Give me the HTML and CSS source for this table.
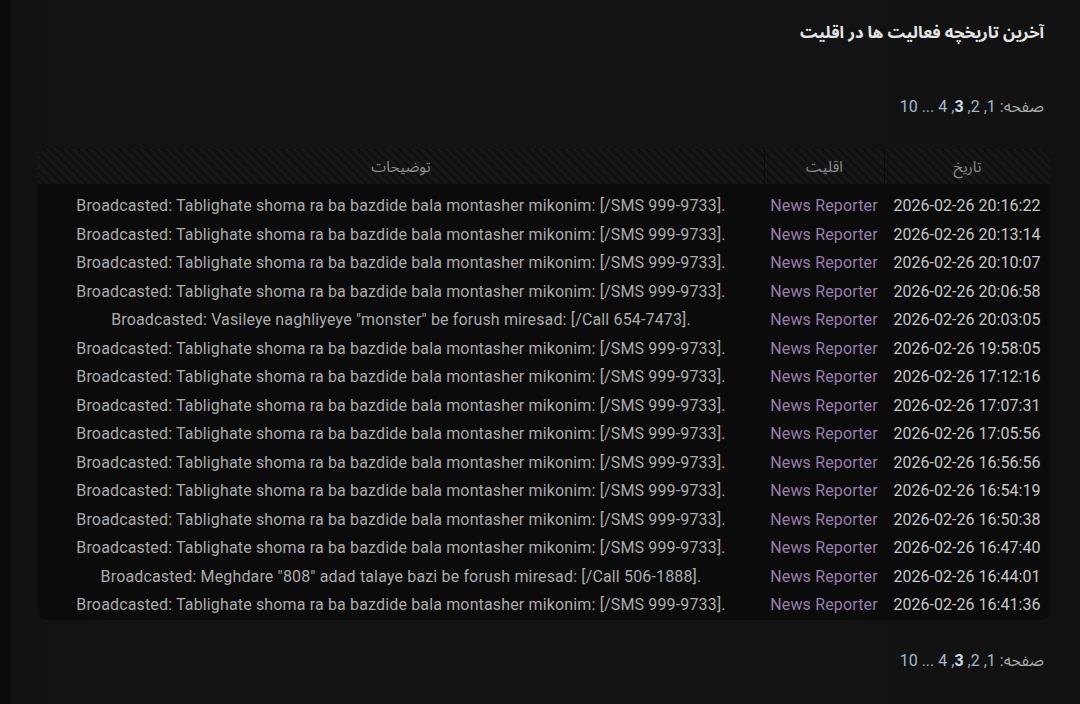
FILE: index.html
```html
<!DOCTYPE html>
<html lang="fa" dir="rtl">
<head>
<meta charset="utf-8">
<title>آخرین تاریخچه فعالیت ها در اقلیت</title>
<link rel="stylesheet" href="styles.css">
</head>
<body>
<div class="page">
  <h2 class="title">آخرین تاریخچه فعالیت ها در اقلیت</h2>
  <p class="pager">صفحه: <a href="#">1</a>, <a href="#">2</a>, <b class="current">3</b>, <a href="#">4</a> ... <a href="#">10</a></p>
  <table class="log">
    <thead>
      <tr><th class="c-date">تاریخ</th><th class="c-fac">اقلیت</th><th class="c-desc">توضیحات</th></tr>
    </thead>
    <tbody>
      <tr><td class="ltr date">2026-02-26 20:16:22</td><td class="ltr fac">News Reporter</td><td class="ltr desc">Broadcasted: Tablighate shoma ra ba bazdide bala montasher mikonim: [/SMS 999-9733].</td></tr>
      <tr><td class="ltr date">2026-02-26 20:13:14</td><td class="ltr fac">News Reporter</td><td class="ltr desc">Broadcasted: Tablighate shoma ra ba bazdide bala montasher mikonim: [/SMS 999-9733].</td></tr>
      <tr><td class="ltr date">2026-02-26 20:10:07</td><td class="ltr fac">News Reporter</td><td class="ltr desc">Broadcasted: Tablighate shoma ra ba bazdide bala montasher mikonim: [/SMS 999-9733].</td></tr>
      <tr><td class="ltr date">2026-02-26 20:06:58</td><td class="ltr fac">News Reporter</td><td class="ltr desc">Broadcasted: Tablighate shoma ra ba bazdide bala montasher mikonim: [/SMS 999-9733].</td></tr>
      <tr><td class="ltr date">2026-02-26 20:03:05</td><td class="ltr fac">News Reporter</td><td class="ltr desc">Broadcasted: Vasileye naghliyeye "monster" be forush miresad: [/Call 654-7473].</td></tr>
      <tr><td class="ltr date">2026-02-26 19:58:05</td><td class="ltr fac">News Reporter</td><td class="ltr desc">Broadcasted: Tablighate shoma ra ba bazdide bala montasher mikonim: [/SMS 999-9733].</td></tr>
      <tr><td class="ltr date">2026-02-26 17:12:16</td><td class="ltr fac">News Reporter</td><td class="ltr desc">Broadcasted: Tablighate shoma ra ba bazdide bala montasher mikonim: [/SMS 999-9733].</td></tr>
      <tr><td class="ltr date">2026-02-26 17:07:31</td><td class="ltr fac">News Reporter</td><td class="ltr desc">Broadcasted: Tablighate shoma ra ba bazdide bala montasher mikonim: [/SMS 999-9733].</td></tr>
      <tr><td class="ltr date">2026-02-26 17:05:56</td><td class="ltr fac">News Reporter</td><td class="ltr desc">Broadcasted: Tablighate shoma ra ba bazdide bala montasher mikonim: [/SMS 999-9733].</td></tr>
      <tr><td class="ltr date">2026-02-26 16:56:56</td><td class="ltr fac">News Reporter</td><td class="ltr desc">Broadcasted: Tablighate shoma ra ba bazdide bala montasher mikonim: [/SMS 999-9733].</td></tr>
      <tr><td class="ltr date">2026-02-26 16:54:19</td><td class="ltr fac">News Reporter</td><td class="ltr desc">Broadcasted: Tablighate shoma ra ba bazdide bala montasher mikonim: [/SMS 999-9733].</td></tr>
      <tr><td class="ltr date">2026-02-26 16:50:38</td><td class="ltr fac">News Reporter</td><td class="ltr desc">Broadcasted: Tablighate shoma ra ba bazdide bala montasher mikonim: [/SMS 999-9733].</td></tr>
      <tr><td class="ltr date">2026-02-26 16:47:40</td><td class="ltr fac">News Reporter</td><td class="ltr desc">Broadcasted: Tablighate shoma ra ba bazdide bala montasher mikonim: [/SMS 999-9733].</td></tr>
      <tr><td class="ltr date">2026-02-26 16:44:01</td><td class="ltr fac">News Reporter</td><td class="ltr desc">Broadcasted: Meghdare "808" adad talaye bazi be forush miresad: [/Call 506-1888].</td></tr>
      <tr><td class="ltr date">2026-02-26 16:41:36</td><td class="ltr fac">News Reporter</td><td class="ltr desc">Broadcasted: Tablighate shoma ra ba bazdide bala montasher mikonim: [/SMS 999-9733].</td></tr>
    </tbody>
  </table>
  <p class="pager">صفحه: <a href="#">1</a>, <a href="#">2</a>, <b class="current">3</b>, <a href="#">4</a> ... <a href="#">10</a></p>
</div>
</body>
</html>
```

FILE: styles.css
```css
html, body {
  margin: 0;
  padding: 0;
}
body {
  background: #0b0b0d;
  font-family: Roboto, "Noto Sans Arabic", "DejaVu Sans", sans-serif;
  color: #b0b0b0;
  height: 704px;
  overflow: hidden;
}
.page {
  margin-left: 10px;
  min-height: 704px;
  box-sizing: border-box;
  padding: 20px 30px 0 28px;
  background: linear-gradient(90deg, #121212 0%, #141414 40%, #131313 70%, #111111 100%);
}
.title {
  margin: 0;
  padding: 0 6px 0 0;
  font-size: 16.5px;
  font-weight: bold;
  line-height: 26px;
  color: #e6e6e6;
}
.pager {
  margin: 0;
  padding: 0 6px 0 0;
  font-size: 16px;
  line-height: 20px;
  color: #a9a9a9;
}
.title + .pager {
  margin-top: 51px;
}
.pager a {
  color: #a3b9cb;
  text-decoration: none;
}
.pager .current {
  color: #c9d9e6;
  font-weight: bold;
}
.log {
  width: 100%;
  margin: 32px 0 31px 0;
  border-collapse: separate;
  border-spacing: 0;
  background: #0b0b0b;
  border-radius: 9px;
  overflow: hidden;
}
.log th {
  height: 35px;
  padding: 0;
  font-size: 15px;
  font-weight: normal;
  color: #8e8e8e;
  text-align: center;
  background: repeating-linear-gradient(45deg, #181818 0 3px, #0f0f0f 3px 6px);
  border-left: 1px solid #0a0a0a;
  border-bottom: 1px solid #0a0a0a;
}
.log th:first-child {
  border-top-right-radius: 9px;
}
.log th:last-child {
  border-left: none;
  border-top-left-radius: 9px;
}
.log th.c-date { width: 165px; }
.log th.c-fac { width: 119px; }
.log td {
  padding: 0;
  font-size: 16px;
  letter-spacing: 0.15px;
  line-height: 28.5px;
  text-align: center;
  white-space: nowrap;
}
.log tbody tr:first-child td {
  padding-top: 7px;
}
.log tbody tr:last-child td:first-child {
  border-bottom-right-radius: 9px;
}
.log tbody tr:last-child td:last-child {
  border-bottom-left-radius: 9px;
}
.ltr {
  direction: ltr;
}
.log td.date {
  color: #c6c6c6;
  letter-spacing: 0.03px;
}
.fac {
  color: #9a7fae;
}
.desc {
  color: #ababab;
}
```
